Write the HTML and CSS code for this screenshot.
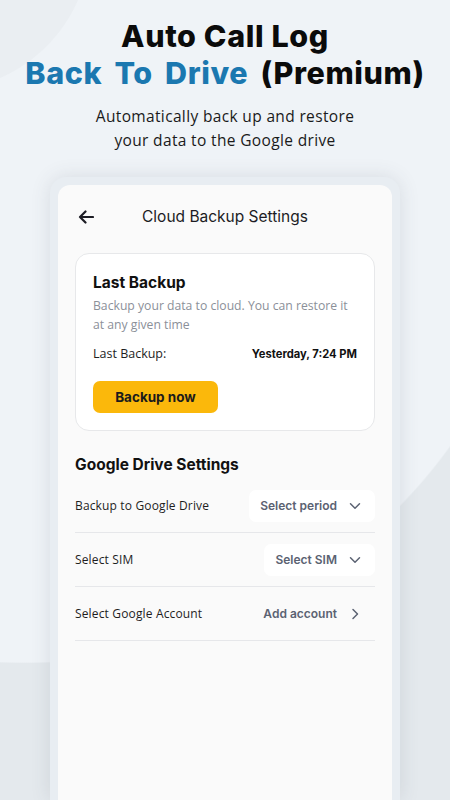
FILE: index.html
```html
<!DOCTYPE html>
<html>
<head>
<meta charset="utf-8">
<link rel="stylesheet" href="styles.css">
</head>
<body>
<div class="page">
  <header class="hero">
    <h1 class="hero-title"><span class="line">Auto Call Log</span><span class="line wide"><span class="accent">Back To Drive</span> (Premium)</span></h1>
    <p class="hero-sub">Automatically back up and restore<br>your data to the Google drive</p>
  </header>
  <div class="frame">
    <div class="screen">
      <div class="appbar">
        <svg class="back" width="16" height="14" viewBox="0 0 16 14"><path d="M15 7H2M7.5 1.5L2 7l5.5 5.5" fill="none" stroke="#1c1c24" stroke-width="2.2" stroke-linecap="round" stroke-linejoin="round"/></svg>
        <div class="appbar-title">Cloud Backup Settings</div>
      </div>
      <div class="card">
        <div class="card-title">Last Backup</div>
        <div class="card-desc">Backup your data to cloud. You can restore it at any given time</div>
        <div class="card-row">
          <span class="card-label">Last Backup:</span>
          <span class="card-value">Yesterday, 7:24 PM</span>
        </div>
        <button class="btn">Backup now</button>
      </div>
      <div class="section-title">Google Drive Settings</div>
      <div class="rows">
        <div class="row">
          <span class="row-label">Backup to Google Drive</span>
          <span class="chip">Select period
            <svg class="chev" width="12" height="8" viewBox="0 0 12 8"><path d="M1.5 1.8L6 6.2l4.5-4.4" fill="none" stroke="#5b6272" stroke-width="1.5" stroke-linecap="round" stroke-linejoin="round"/></svg>
          </span>
        </div>
        <div class="row">
          <span class="row-label">Select SIM</span>
          <span class="chip">Select SIM
            <svg class="chev" width="12" height="8" viewBox="0 0 12 8"><path d="M1.5 1.8L6 6.2l4.5-4.4" fill="none" stroke="#5b6272" stroke-width="1.5" stroke-linecap="round" stroke-linejoin="round"/></svg>
          </span>
        </div>
        <div class="row">
          <span class="row-label">Select Google Account</span>
          <span class="chip plain">Add account
            <svg class="chev" width="12" height="12" viewBox="0 0 12 12"><path d="M4 1.5L8.5 6 4 10.5" fill="none" stroke="#5b6272" stroke-width="1.5" stroke-linecap="round" stroke-linejoin="round"/></svg>
          </span>
        </div>
      </div>
    </div>
  </div>
</div>
</body>
</html>
```
FILE: styles.css
```css
* { box-sizing: border-box; }
html, body { margin: 0; padding: 0; }
body {
  width: 450px;
  height: 800px;
  overflow: hidden;
  font-family: "Open Sans", "Liberation Sans", sans-serif;
  background:
    radial-gradient(circle at -60px -60px, #eaeef2 0 150px, transparent 151px),
    radial-gradient(ellipse 520px 512px at 25px 150px, #eff3f7 0 100%, transparent 100.3%),
    linear-gradient(#e4e9ed 0 0);
}
.page {
  display: flex;
  flex-direction: column;
  align-items: center;
  height: 800px;
}
.hero {
  text-align: center;
  padding-top: 17px;
}
.hero-title {
  margin: 0;
  display: flex;
  flex-direction: column;
  align-items: center;
  font-family: "Inter", sans-serif;
  font-weight: 800;
  font-size: 30.5px;
  color: #0b0b0b;
  letter-spacing: 0.6px;
  white-space: nowrap;
}
.line {
  display: block;
  height: 37px;
  line-height: 37px;
}
.line.wide { word-spacing: 5px; }
.accent { color: #1b78b0; }
.hero-sub {
  margin: 13px 0 0;
  font-family: "Open Sans", sans-serif;
  font-size: 15.5px;
  line-height: 24px;
  color: #1a1a1a;
  letter-spacing: 0.35px;
}
.frame {
  margin-top: 25px;
  width: 350px;
  flex: 1;
  background: #e8edf2;
  border-radius: 16px 16px 0 0;
  padding: 8px 8px 0;
  box-shadow: 0 0 20px rgba(60, 70, 85, 0.13);
}
.screen {
  height: 100%;
  background: #fafafa;
  border-radius: 12px 12px 0 0;
  padding: 0 17px;
}
.appbar {
  position: relative;
  height: 64px;
  display: flex;
  align-items: center;
  justify-content: center;
}
.back {
  position: absolute;
  left: 3px;
  top: 25px;
}
.appbar-title {
  font-family: "Inter", sans-serif;
  font-size: 15.5px;
  color: #1c1c24;
  margin-top: -2px;
}
.card {
  margin-top: 4px;
  background: #fff;
  border: 1px solid #e7e8ea;
  border-radius: 14px;
  padding: 19px 17px 17px;
}
.card-title {
  font-family: "Inter", sans-serif;
  font-weight: 700;
  font-size: 15.5px;
  color: #111;
  line-height: 20px;
}
.card-desc {
  margin-top: 3px;
  font-family: "Open Sans", sans-serif;
  font-size: 12.2px;
  line-height: 19px;
  color: #8b9099;
}
.card-row {
  margin-top: 10px;
  display: flex;
  justify-content: space-between;
  align-items: center;
  line-height: 20px;
}
.card-label {
  font-family: "Open Sans", sans-serif;
  font-size: 12.5px;
  color: #1e1e1e;
}
.card-value {
  font-family: "Inter", sans-serif;
  font-weight: 700;
  font-size: 11.2px;
  color: #111;
}
.btn {
  margin-top: 17px;
  width: 125px;
  height: 32px;
  border: 0;
  border-radius: 7px;
  background: #fbb80b;
  font-family: "Inter", sans-serif;
  font-weight: 700;
  font-size: 13.5px;
  color: #1b1b1b;
  padding: 0;
}
.section-title {
  margin-top: 24px;
  font-family: "Inter", sans-serif;
  font-weight: 700;
  font-size: 15.5px;
  color: #111;
  line-height: 20px;
}
.rows { margin-top: 4px; }
.row {
  height: 54px;
  display: flex;
  align-items: center;
  justify-content: space-between;
  border-bottom: 1px solid #e6e7ea;
}
.row-label {
  font-family: "Open Sans", sans-serif;
  font-size: 12px;
  color: #1e1e1e;
  letter-spacing: 0.15px;
}
.chip {
  display: flex;
  align-items: center;
  gap: 12px;
  height: 32px;
  padding: 0 14px 0 11px;
  background: #fff;
  border-radius: 7px;
  font-family: "Inter", sans-serif;
  font-weight: 600;
  font-size: 12px;
  color: #5b6272;
}
.chip.plain { background: transparent; }
.chev { display: block; }
```
